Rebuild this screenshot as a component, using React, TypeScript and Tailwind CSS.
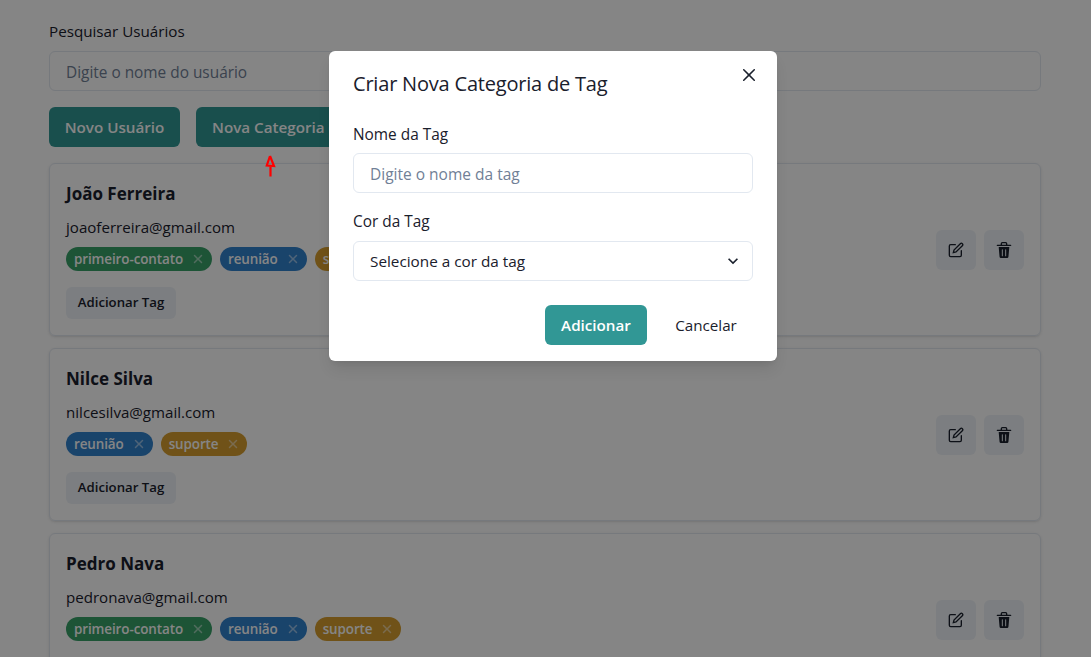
const FONT = "font-['Open_Sans','Noto_Sans',sans-serif]";

function TagClose() {
  return (
    <svg viewBox="0 0 512 512" className="w-[16px] h-[16px] ml-[7px] opacity-50 shrink-0" fill="currentColor">
      <path d="M289.94 256l95-95A24 24 0 00351 127l-95 95-95-95a24 24 0 00-34 34l95 95-95 95a24 24 0 1034 34l95-95 95 95a24 24 0 0034-34z" />
    </svg>
  );
}

function Tag({ label, color }: { label: string; color: string }) {
  return (
    <span className={`inline-flex items-center h-[24px] rounded-full pl-[8px] pr-[6px] text-white text-[13.45px] font-semibold tracking-[-0.1px] ${color}`}>
      {label}
      <TagClose />
    </span>
  );
}

const tagStyles: Record<string, string> = {
  "primeiro-contato": "bg-[#38a169]",
  "reunião": "bg-[#3182ce]",
  suporte: "bg-[#d69e2e]",
};

function EditIcon() {
  return (
    <svg viewBox="0 0 24 24" className="w-[16px] h-[16px]" fill="none" stroke="currentColor" strokeLinecap="round" strokeWidth="2">
      <path d="M11 4H4a2 2 0 0 0-2 2v14a2 2 0 0 0 2 2h14a2 2 0 0 0 2-2v-7" />
      <path d="M18.5 2.5a2.121 2.121 0 0 1 3 3L12 15l-4 1 1-4 9.5-9.5z" />
    </svg>
  );
}

function DeleteIcon() {
  return (
    <svg viewBox="0 0 24 24" className="w-[16px] h-[16px]" fill="currentColor">
      <path d="M19.452 7.5H4.547a.5.5 0 00-.5.545l1.287 14.136A2 2 0 007.326 24h9.347a2 2 0 001.992-1.819L19.95 8.045a.5.5 0 00-.129-.382.5.5 0 00-.369-.163zm-9.2 13a.75.75 0 01-1.5 0v-9a.75.75 0 011.5 0zm5 0a.75.75 0 01-1.5 0v-9a.75.75 0 011.5 0zM22 4h-4.75a.25.25 0 01-.25-.25V2.5A2.5 2.5 0 0014.5 0h-5A2.5 2.5 0 007 2.5v1.25a.25.25 0 01-.25.25H2a1 1 0 000 2h20a1 1 0 000-2zM9 3.75V2.5a.5.5 0 01.5-.5h5a.5.5 0 01.5.5v1.25a.25.25 0 01-.25.25h-5.5A.25.25 0 019 3.75z" />
    </svg>
  );
}

function UserCard({ name, email, tags }: { name: string; email: string; tags: string[] }) {
  return (
    <div className="shrink-0 h-[173px] border border-[#e2e8f0] rounded-md shadow-sm px-[16px] pt-[16px] flex items-center justify-between">
      <div className="self-start flex flex-col items-start">
        <h2 className="text-[17px] leading-[28px] font-bold">{name}</h2>
        <p className="mt-[7px] text-[15.1px] leading-[24px]">{email}</p>
        <div className="mt-[8px] flex gap-[8px]">
          {tags.map((t) => (
            <Tag key={t} label={t} color={tagStyles[t]} />
          ))}
        </div>
        <button className="mt-[16px] h-[32px] w-[110px] rounded-md bg-[#edf2f7] text-[13.2px] font-semibold">Adicionar Tag</button>
      </div>
      <div className="flex gap-[8px] -mt-[16px]">
        <button className="w-[40px] h-[40px] rounded-md bg-[#edf2f7] flex items-center justify-center"><EditIcon /></button>
        <button className="w-[40px] h-[40px] rounded-md bg-[#edf2f7] flex items-center justify-center"><DeleteIcon /></button>
      </div>
    </div>
  );
}

export default function App() {
  return (
    <div className={`relative h-screen overflow-hidden bg-white text-[#1a202c] ${FONT}`}>
      <div className="ml-[49px] w-[992px] pt-[19px] flex flex-col">
        <label className="block text-[15.2px] leading-[24px] font-medium mb-[8px]">Pesquisar Usuários</label>
        <div className="h-[40px] border border-[#e2e8f0] rounded-md pl-[16px] pt-[3px] flex items-center text-[15.4px] leading-[24px] text-[#718096]">Digite o nome do usuário</div>
        <div className="mt-[16px] flex gap-[16px]">
          <button className="h-[40px] w-[131px] rounded-md bg-[#319795] text-white text-[15.2px] font-semibold">Novo Usuário</button>
          <button className="h-[40px] px-[16px] rounded-md bg-[#319795] text-white text-[15.2px] font-semibold">Nova Categoria de Tag</button>
        </div>
        <div className="mt-[16px] flex flex-col gap-[12px]">
          <UserCard name="João Ferreira" email="joaoferreira@gmail.com" tags={["primeiro-contato", "reunião", "suporte"]} />
          <UserCard name="Nilce Silva" email="nilcesilva@gmail.com" tags={["reunião", "suporte"]} />
          <UserCard name="Pedro Nava" email="pedronava@gmail.com" tags={["primeiro-contato", "reunião", "suporte"]} />
        </div>
      </div>

      <div className="absolute inset-0 bg-black/[0.48]" />

      <svg viewBox="0 0 14 26" className="absolute left-[263px] top-[153px] w-[14px] h-[26px]" fill="none" stroke="#ff0000" strokeWidth="2.2">
        <path d="M7 3 L3.8 12.5 L11 13 L7 3 M7.5 13 L7.5 23.5" />
      </svg>

      <div className="absolute left-[329px] top-[51px] w-[448px] h-[310px] bg-white rounded-md shadow-lg">
        <div className="px-[24px] pt-[17px] pb-[23px]">
          <h3 className="text-[20px] leading-[32px] font-medium tracking-[-0.2px]">Criar Nova Categoria de Tag</h3>
        </div>
        <button className="absolute right-[12px] top-[8px] w-[32px] h-[32px] flex items-center justify-center">
          <svg viewBox="0 0 24 24" className="w-[12px] h-[12px]" fill="currentColor">
            <path d="M.439,21.44a1.5,1.5,0,0,0,2.122,2.121L11.823,14.3a.25.25,0,0,1,.354,0l9.262,9.263a1.5,1.5,0,1,0,2.122-2.121L14.3,12.177a.25.25,0,0,1,0-.354l9.263-9.262A1.5,1.5,0,0,0,21.439.44L12.177,9.7a.25.25,0,0,1-.354,0L2.561.44A1.5,1.5,0,0,0,.439,2.561L9.7,11.823a.25.25,0,0,1,0,.354Z" />
          </svg>
        </button>
        <div className="px-[24px]">
          <label className="block text-[15.4px] leading-[24px] font-medium mb-[6px]">Nome da Tag</label>
          <div className="h-[40px] border border-[#e2e8f0] rounded-md pl-[16px] pt-[2px] flex items-center text-[15.5px] leading-[24px] text-[#718096]">Digite o nome da tag</div>
          <label className="block text-[15.4px] leading-[24px] font-medium mt-[17px] mb-[7px]">Cor da Tag</label>
          <div className="h-[40px] border border-[#e2e8f0] rounded-md pl-[16px] pr-[9px] flex items-center justify-between text-[15.3px] leading-[24px]">
            Selecione a cor da tag
            <svg viewBox="0 0 24 24" className="w-[20px] h-[20px]" fill="currentColor">
              <path d="M16.59 8.59L12 13.17 7.41 8.59 6 10l6 6 6-6z" />
            </svg>
          </div>
          <div className="mt-[24px] flex justify-end gap-[12px]">
            <button className="h-[40px] w-[102px] rounded-md bg-[#319795] text-white text-[15.2px] font-semibold">Adicionar</button>
            <button className="h-[40px] w-[94px] rounded-md text-[15.2px] font-medium">Cancelar</button>
          </div>
        </div>
      </div>
    </div>
  );
}
